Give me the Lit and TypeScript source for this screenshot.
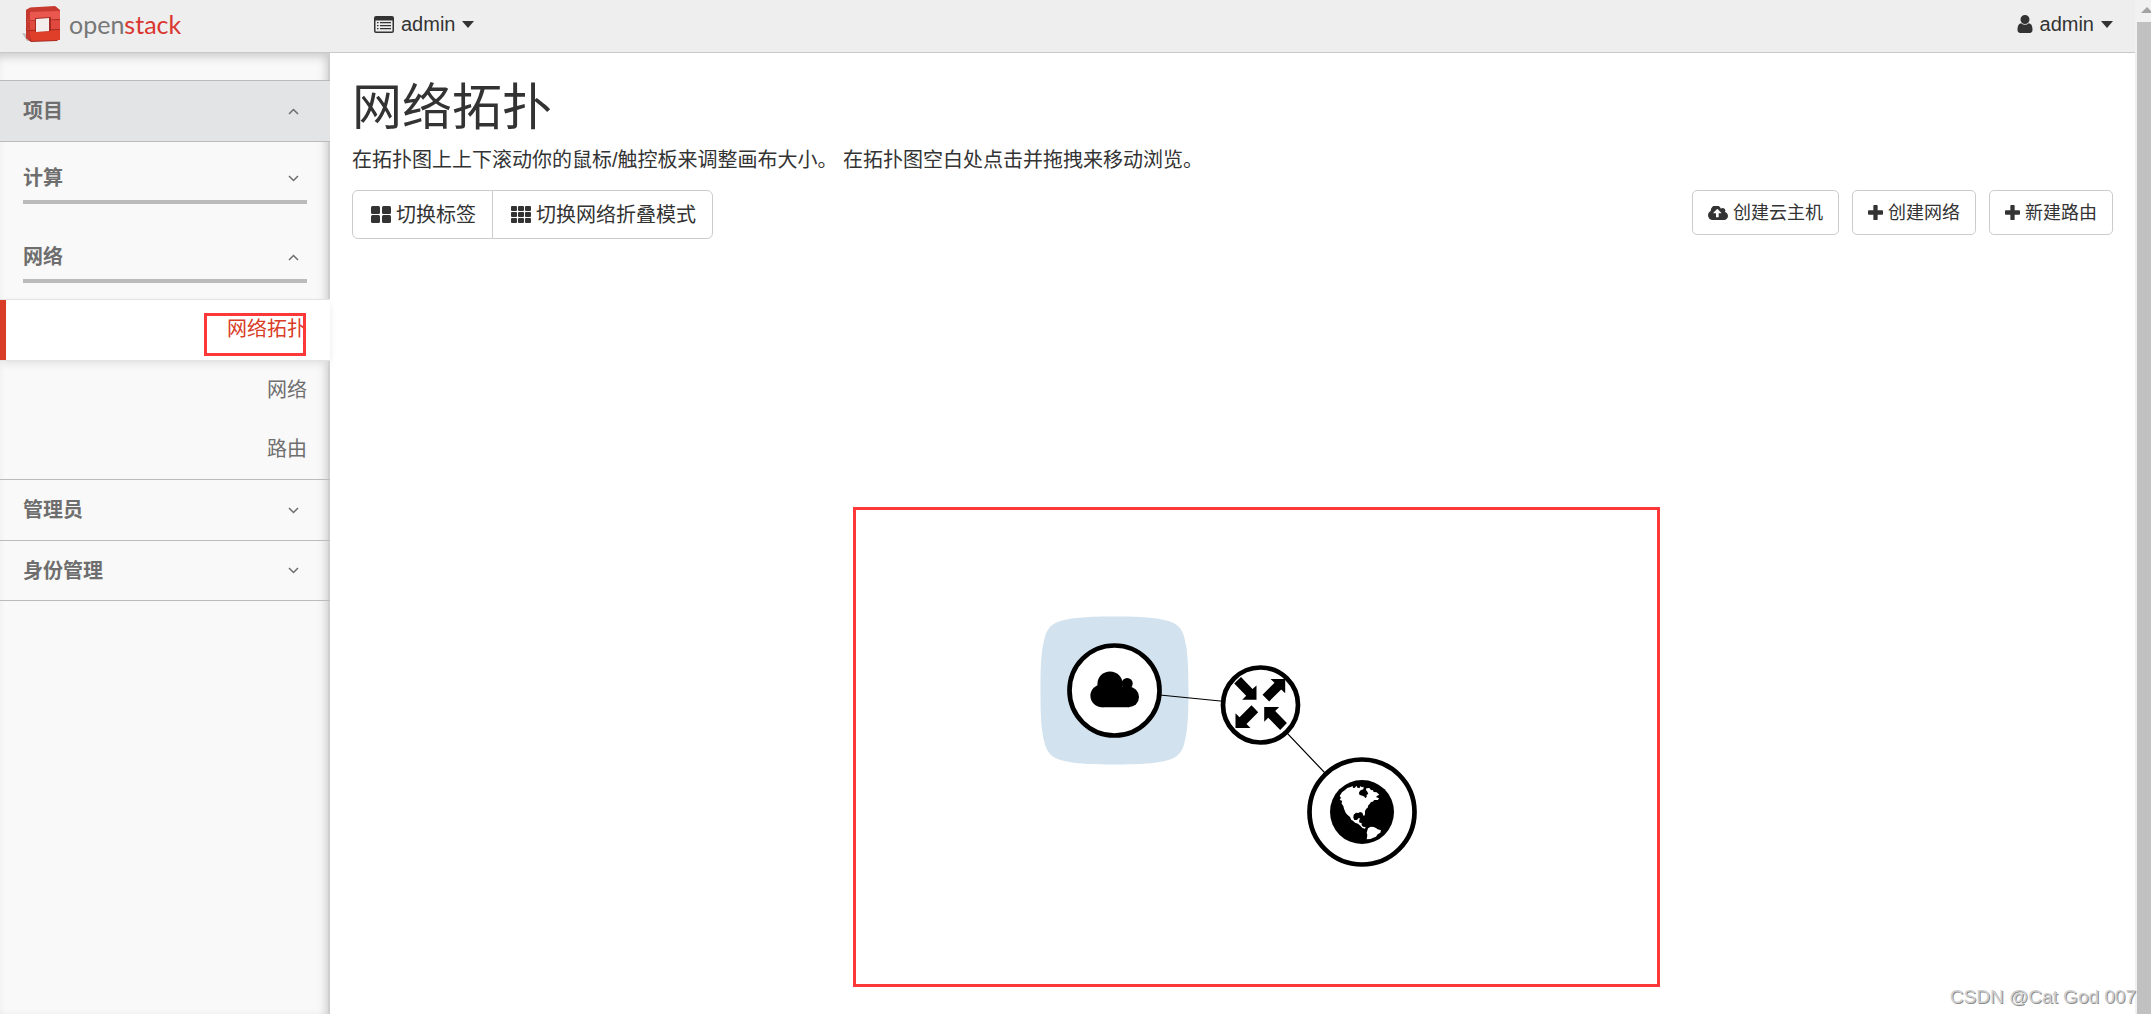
import { LitElement, html, svg, css } from "lit";
import { customElement, property } from "lit/decorators.js";

const ICONS = {
  list: {
    box: "0 0 20 17",
    body: svg`<path fill-rule="evenodd" d="M2 0h16a2 2 0 0 1 2 2v13a2 2 0 0 1-2 2H2a2 2 0 0 1-2-2V2a2 2 0 0 1 2-2zM1.5 4.5v10.6q0 .4.4.4h16.2q.4 0 .4-.4V4.500z"/><path d="M3 6h1.500v1.300H3zM6 6h11v1.300H6zM3 9h1.500v1.300H3zM6 9h11v1.300H6zM3 12h1.500v1.300H3zM6 12h11v1.300H6z"/>`,
  },
  user: {
    box: "256 128 1280 1536",
    body: svg`<path d="M1536 1399q0 109-62.5 187t-150.5 78h-854q-88 0-150.5-78t-62.5-187q0-85 8.5-160.5t31.5-152 58.5-131 94-89 134.5-34.5q131 128 313 128t313-128q76 0 134.5 34.5t94 89 58.5 131 31.5 152 8.5 160.5zm-256-887q0 159-112.5 271.5t-271.5 112.5-271.5-112.5-112.5-271.5 112.5-271.5 271.5-112.5 271.5 112.5 112.5 271.5z"/>`,
  },
  caret: { box: "0 0 12 7", body: svg`<path d="M0 0h12L6 7z"/>` },
  up: { box: "0 0 11 7", body: svg`<path d="M1 6l4.500-4.500L10 6" fill="none" stroke="currentColor" stroke-width="1.500"/>` },
  down: { box: "0 0 11 7", body: svg`<path d="M1 1l4.500 4.500L10 1" fill="none" stroke="currentColor" stroke-width="1.500"/>` },
  large: {
    box: "0 0 20 17",
    body: svg`<rect width="9" height="8" rx="1.500"/><rect x="11" width="9" height="8" rx="1.500"/><rect y="9" width="9" height="8" rx="1.500"/><rect x="11" y="9" width="9" height="8" rx="1.500"/>`,
  },
  grid: {
    box: "0 0 20 17",
    body: svg`${[0, 7, 14].map((x) => [0, 6, 12].map((y) => svg`<rect x=${x} y=${y} width="6" height="5" rx="1"/>`))}`,
  },
  upload: {
    box: "0 256 1920 1344",
    body: svg`<path d="M1280 928q0-14-9-23l-352-352q-9-9-23-9t-23 9l-351 351q-10 12-10 24 0 14 9 23t23 9h224v352q0 13 9.5 22.5t22.5 9.5h192q13 0 22.5-9.5t9.5-22.5v-352h224q13 0 22.5-9.5t9.5-22.5zm640 288q0 159-112.5 271.5t-271.5 112.5h-1088q-185 0-316.5-131.5t-131.5-316.5q0-130 70-240t188-165q-2-30-2-43 0-212 150-362t362-150q156 0 285.5 87t188.5 231q71-62 166-62 106 0 181 75t75 181q0 76-41 138 130 31 213.5 135.5t83.5 238.5z"/>`,
  },
  plus: {
    box: "0 0 14 14",
    body: svg`<path d="M5 .8q0-.8.8-.8h2.400q.8 0 .8.8V5h4.200q.8 0 .8.8v2.400q0 .8-.8.8H9v4.200q0 .8-.8.8H5.800q-.8 0-.8-.8V9H.8q-.8 0-.8-.8V5.800q0-.8.8-.8H5z"/>`,
  },
};

type IconName = keyof typeof ICONS;

@customElement("os-icon")
class OsIcon extends LitElement {
  @property() name: IconName = "plus";

  static styles = css`
    :host { display: inline-flex; flex: none; }
    .glyph { display: block; width: 100%; height: 100%; fill: currentColor; }
  `;

  render() {
    const icon = ICONS[this.name];
    return html`<svg class="glyph" viewBox=${icon.box} aria-hidden="true">${icon.body}</svg>`;
  }
}

@customElement("os-header")
class OsHeader extends LitElement {
  static styles = css`
    :host { display: block; }
    .bar {
      display: flex; align-items: center; height: 52px; box-sizing: content-box;
      background: #eee; border-bottom: 1px solid #c8c8c8; padding: 0 22px; color: #333;
    }
    .brand { display: flex; align-items: center; gap: 8px; width: 352px; height: 48px; margin-bottom: 4px; text-decoration: none; }
    .cube { width: 39px; height: 36px; flex: none; }
    .name { font: 25px/36px Lato, "Liberation Sans", sans-serif; color: #777; }
    .red { color: #d9372f; }
    .menu {
      display: flex; align-items: center; gap: 7px; border: 0; background: none; padding: 0;
      margin-bottom: 4px; font: inherit; color: inherit;
    }
    .last { margin-left: auto; }
    .list { width: 20px; height: 17px; }
    .user { width: 16px; height: 18px; }
    .caret { width: 12px; height: 7px; }
  `;

  render() {
    return html`
      <header class="bar">
        <a class="brand" href="#" aria-label="openstack">
          <svg class="cube" viewBox="0 0 39 36" aria-hidden="true">
            <path d="M0 27l5 1 3 7H5z" fill="#aaa" opacity=".7"/>
            <path d="M4 4l5-2 25-1 4 4v27l-3 3-26 1-5-4z" fill="#a52a22"/>
            <path d="M4 4l4-2.500L33 0l5 4v9H9L4 10z" fill="#c83a30"/>
            <path d="M5 6l33-1v8l-33 1.500z" fill="#ea574f"/>
            <path d="M5 15l33-1v9L5 24z" fill="#e04a3e"/>
            <path d="M7 25l31-1v10L9 35z" fill="#df3f29"/>
            <path d="M4 5l4 1v8l-4-1zM4 15l4 1v8l-4-2zM4 24l4 2v9l-4-3z" fill="#c4382d"/>
            <path d="M13 12l16-1v14l-16 1z" fill="#a52a22"/>
            <path d="M14 13l13-1v13l-13 1z" fill="#f3eeed"/>
          </svg>
          <span class="name">open<span class="red">stack</span></span>
        </a>
        <button class="menu" type="button">
          <os-icon class="list" name="list"></os-icon>admin<os-icon class="caret" name="caret"></os-icon>
        </button>
        <button class="menu last" type="button">
          <os-icon class="user" name="user"></os-icon>admin<os-icon class="caret" name="caret"></os-icon>
        </button>
      </header>
    `;
  }
}

@customElement("os-sidebar")
class OsSidebar extends LitElement {
  static styles = css`
    :host { display: block; }
    .side {
      box-sizing: border-box; height: 100%; padding-top: 27px; background: #f9f9f9; color: #6e6e6e;
      box-shadow: inset -2px 0 0 #cfcfcf, inset -4px 4px 8px #ccc;
    }
    .toggle {
      display: flex; align-items: center; justify-content: space-between; width: 100%;
      border: 0; background: none; padding: 0 31px 0 23px; font: inherit; font-weight: 700; color: inherit;
    }
    .panel { height: 60px; border-bottom: 1px solid #bbb; }
    .open { height: 62px; border-top: 1px solid #bbb; background: #e3e4e6; }
    .top { border-top: 1px solid #bbb; height: 62px; }
    .group { margin: 0 23px 17px; border-bottom: 4px solid #bbb; }
    .inner { height: 58px; padding: 14px 8px 0 0; }
    .chevron { width: 11px; height: 7px; }
    .links { list-style: none; margin: 0; padding: 0; }
    .link {
      position: relative; display: flex; align-items: center; justify-content: flex-end; height: 57px;
      padding: 0 23px 2px; color: inherit; text-decoration: none;
    }
    .active {
      margin-top: -1px; height: 58px; border: 1px solid #e3e3e3; border-width: 1px 0; background: #fff; color: #d93c27;
      box-shadow: inset 6px 0 0 #d93c27, 0 4px 8px -2px #ddd;
    }
    .mark {
      position: absolute; right: 24px; top: 13px; box-sizing: border-box; width: 102px; height: 43px;
      border: 3px solid #fd3838;
    }
  `;

  render() {
    const down = html`<os-icon class="chevron" name="down"></os-icon>`;
    const up = html`<os-icon class="chevron" name="up"></os-icon>`;
    return html`
      <nav class="side">
        <button class="toggle panel open" type="button" aria-expanded="true">项目${up}</button>
        <div class="group"><button class="toggle inner" type="button" aria-expanded="false">计算${down}</button></div>
        <div class="group"><button class="toggle inner" type="button" aria-expanded="true">网络${up}</button></div>
        <ul class="links">
          <li><a class="link active" href="#" aria-current="page">网络拓扑<span class="mark"></span></a></li>
          <li><a class="link" href="#">网络</a></li>
          <li><a class="link" href="#">路由</a></li>
        </ul>
        <button class="toggle panel top" type="button" aria-expanded="false">管理员${down}</button>
        <button class="toggle panel" type="button" aria-expanded="false">身份管理${down}</button>
      </nav>
    `;
  }
}

@customElement("os-topology")
class OsTopology extends LitElement {
  static styles = css`
    :host { display: block; position: relative; min-height: 748px; }
    .frame {
      position: absolute; left: calc(50% - 380px); top: 268px; box-sizing: border-box;
      width: 807px; height: 480px; border: 3px solid #fd3838;
    }
    .graph { display: block; width: 100%; height: 100%; }
    .hull { fill: #d2e3ef; }
    .ring { fill: #fff; stroke: #000; stroke-width: 4.7; }
    .edge { fill: none; stroke: #000; stroke-width: 1.2; }
    .land { fill: #fff; }
  `;

  render() {
    return html`
      <div class="frame">
        <svg class="graph" viewBox="0 0 801 474" role="img" aria-label="网络拓扑">
          <path class="hull" transform="translate(258.5 180.500)"
            d="M-74 0C-74-28-73-40-70-52Q-67-67-52-70C-40-73-28-74 0-74S40-73 52-70Q67-67 70-52C73-40 74-28 74 0S73 40 70 52Q67 67 52 70C40 73 28 74 0 74S-40 73-52 70Q-67 67-70 52C-73 40-74 28-74 0z"/>
          <path class="edge" d="M258.500 180.500L404.500 195L506 302"/>
          <g transform="translate(258.5 180.500)">
            <circle class="ring" r="45"/>
            <circle cx="-12.700" cy="5.300" r="11.400"/>
            <circle cx="14.300" cy="6.500" r="10.200"/>
            <circle cx="-4.500" cy="-6.500" r="12.600"/>
            <circle cx="12.700" cy="-7" r="5.500"/>
            <path d="M-13-4H17V10L14.300 16.700H-12.700z"/>
          </g>
          <g transform="translate(404.5 195)">
            <circle class="ring" r="37.500"/>
            <path d="M-19.500-28L-8-16l4-3.500v14.200h-14.300l4-4L-26.300-21.500z"/>
            <path d="M24.700-26H10l4 3.700-12 12 6.700 6.700 12-12 4 3.900z"/>
            <path d="M-25 23V8.300l4 4 12-12 6.700 7-11.700 11.700 4 4z"/>
            <path d="M3.700 2h15l-4 4 11.700 12-6.700 7-12-12.300-4 4z"/>
          </g>
          <g transform="translate(506 302)">
            <circle class="ring" r="52.500"/>
            <circle r="32"/>
            <g class="land" transform="scale(.3333) translate(-156 -156)">
              <path d="M89 108l7-11 8-6 8-7 10-3 6-3 1 6 6-1 4-6 4 7 7-1 1-5 5 4 5-2-1 8-8 3-5 6 1 7 9 3 7 3 1 5 5-4 0-7 5-2-3-7-4-5 1-5 9-1 5 6 6 1 2 5 9 1 8 7-6 3-4 4 9 4-3 5-11 0-5 5-5 1-4 6-4 4-2 7-5 4-3 7 0 9-3 6-3-5-2-6-7-2-5 3-7-1-7 6-1 9 3 7 8 0 4-5 5 0-3 8 2 5 6 1 0 7 4 4 8 1-2 5-8-2-6-7-7-6-9-3-6-6-5-2-4-9-8-7-5-6-5-12-2-8-5-7 1-9-7-2 4-7z"/>
              <path d="M174 205l8-5 9 1 7 3 5 4 10 3-2 7-8 5-5 7-10 4-6 3-12 1 2-13-2-7z"/>
            </g>
          </g>
        </svg>
      </div>
    `;
  }
}

@customElement("app-root")
class AppRoot extends LitElement {
  static styles = css`
    :host {
      display: grid; grid-template-columns: minmax(0, 1fr) 16px; min-height: 100vh; position: relative;
      background: #fff; color: #333; overflow: hidden;
      font: 20px/28px "Liberation Sans", "Noto Sans CJK SC", sans-serif;
    }
    .page { display: flex; flex-direction: column; }
    .body { flex: 1; display: grid; grid-template-columns: 330px minmax(0, 1fr); }
    .main { display: flex; flex-direction: column; padding: 25px 22px 0; }
    .title { margin: 0; font-size: 50px; line-height: 60px; font-weight: 400; }
    .hint { margin: 8px 0 16px; }
    .tools { display: flex; align-items: flex-start; justify-content: space-between; height: 49px; }
    .set { display: flex; }
    .actions { display: flex; gap: 13px; }
    .btn {
      display: flex; align-items: center; gap: 5px; height: 45px; padding: 0 15px;
      border: 1px solid #ccc; border-radius: 5px; background: #fff; color: inherit;
      font: inherit; font-size: 18px;
    }
    .big { height: 49px; padding: 0 16px 0 18px; font-size: 20px; }
    .first { border-radius: 6px 0 0 6px; }
    .second { border-radius: 0 6px 6px 0; margin-left: -1px; }
    .wide { width: 20px; height: 17px; }
    .cloud { width: 20px; height: 14px; }
    .plus { width: 15px; height: 15px; }
    .canvas { flex: 1; }
    .scroll { background: #f1f1f1; display: flex; flex-direction: column; padding-left: 2px; }
    .arrow { width: 0; border: 6px solid transparent; border-top: 0; border-bottom: 6px solid #a3a3a3; margin: 7px 0 9px 4px; }
    .thumb { flex: 1; background: #c1c1c1; }
    .credit {
      position: absolute; right: 15px; bottom: 3px; font-size: 19px; color: #d0d0d0;
      text-shadow: 1px 1px 0 #8c8c8c;
    }
  `;

  render() {
    return html`
      <div class="page">
        <os-header></os-header>
        <div class="body">
          <os-sidebar></os-sidebar>
          <main class="main">
            <h1 class="title">网络拓扑</h1>
            <p class="hint">在拓扑图上上下滚动你的鼠标/触控板来调整画布大小。 在拓扑图空白处点击并拖拽来移动浏览。</p>
            <div class="tools">
              <div class="set">
                <button class="btn big first" type="button"><os-icon class="wide" name="large"></os-icon>切换标签</button>
                <button class="btn big second" type="button"><os-icon class="wide" name="grid"></os-icon>切换网络折叠模式</button>
              </div>
              <div class="actions">
                <button class="btn" type="button"><os-icon class="cloud" name="upload"></os-icon>创建云主机</button>
                <button class="btn" type="button"><os-icon class="plus" name="plus"></os-icon>创建网络</button>
                <button class="btn" type="button"><os-icon class="plus" name="plus"></os-icon>新建路由</button>
              </div>
            </div>
            <os-topology class="canvas"></os-topology>
          </main>
        </div>
      </div>
      <div class="scroll" aria-hidden="true"><div class="arrow"></div><div class="thumb"></div></div>
      <span class="credit">CSDN @Cat God 007</span>
    `;
  }
}
